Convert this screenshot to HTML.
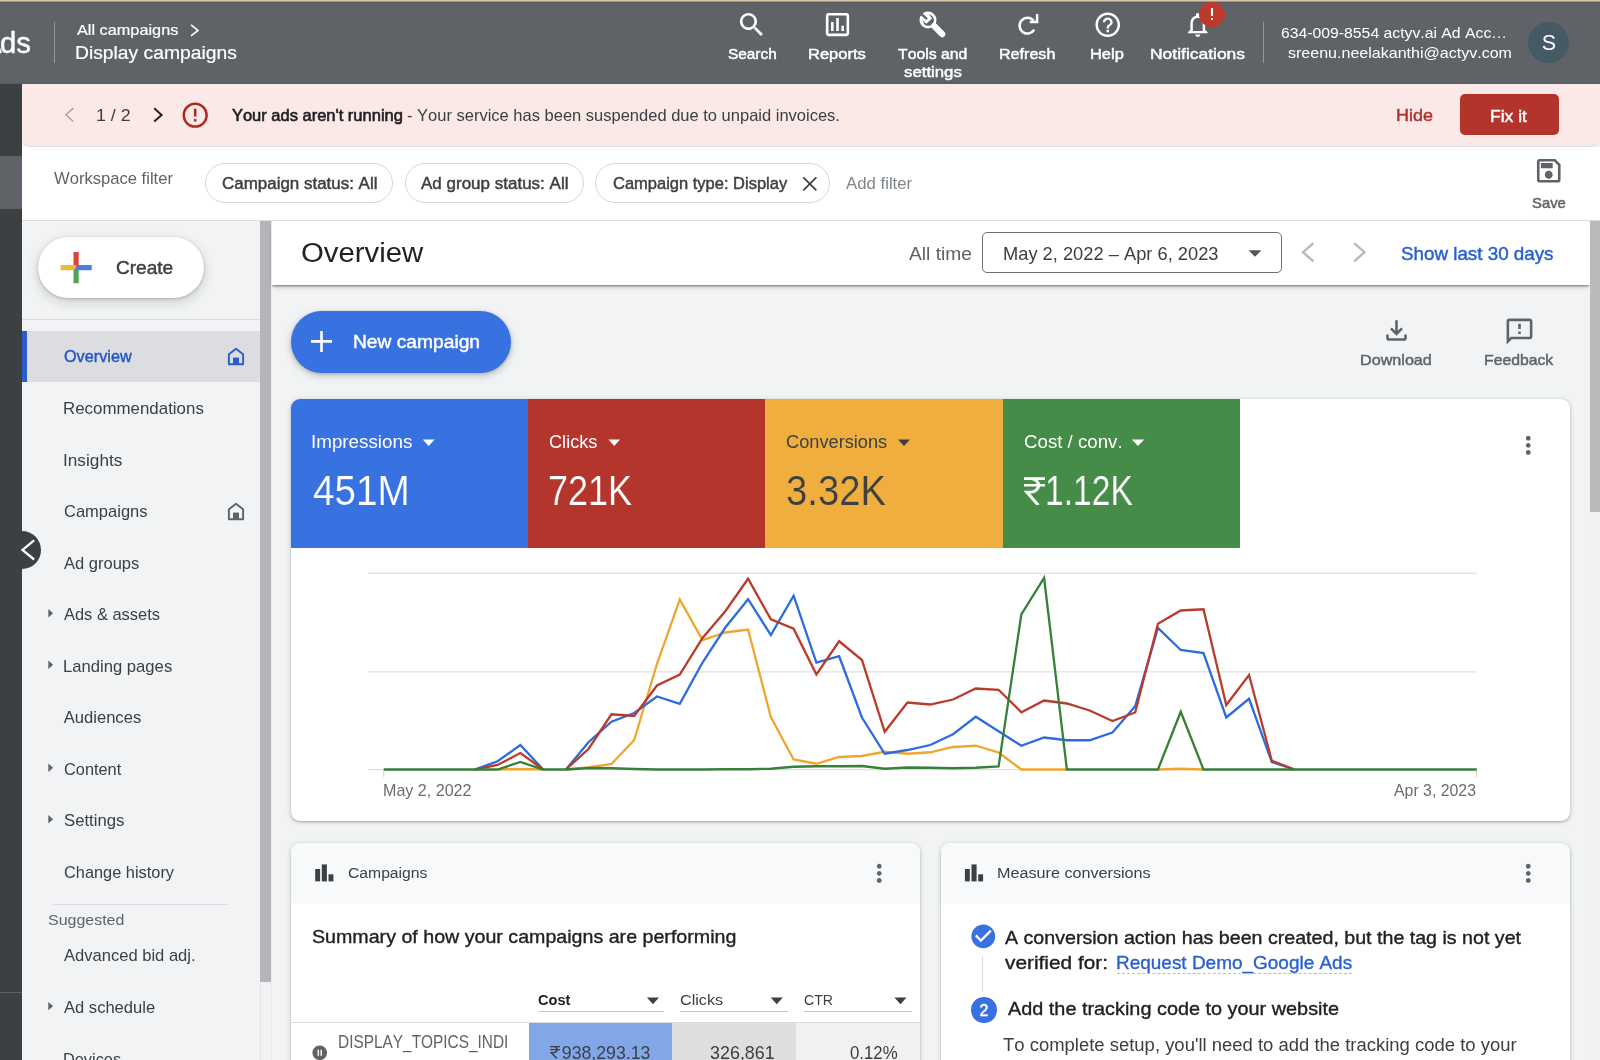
<!DOCTYPE html>
<html><head><meta charset="utf-8"><title>Google Ads - Overview</title>
<style>
html,body{margin:0;padding:0}
body{width:1600px;height:1060px;overflow:hidden;position:relative;font-family:"Liberation Sans", sans-serif;background:#f1f3f4}
#r{position:absolute;left:0;top:0;width:1600px;height:1060px;overflow:hidden;will-change:transform}
#r div,#r span,#r svg{position:absolute;display:block;box-sizing:content-box}
#r span{white-space:pre;font-kerning:none;font-family:"Liberation Sans", sans-serif;transform-origin:0 0}
</style></head>
<body><div id="r">
<div style="left:0px;top:0px;width:1600px;height:1060px;background:#f1f3f4;"></div>
<div style="left:0px;top:0px;width:1600px;height:1px;background:#dcc5a8;"></div>
<div style="left:0px;top:1px;width:1600px;height:1px;background:#a59887;"></div>
<div style="left:0px;top:2px;width:1600px;height:1px;background:#565a5f;"></div>
<div style="left:0px;top:3px;width:1600px;height:81px;background:#5f6368;"></div>
<div style="left:0px;top:84px;width:22px;height:980px;background:#3c4043;"></div>
<div style="left:0px;top:156px;width:22px;height:53px;background:#5f6368;"></div>
<div style="left:0px;top:992px;width:22px;height:1px;background:#5f6368;"></div>
<div style="left:22px;top:84px;width:1578px;height:62px;background:#fae9e6;border-radius:0 0 9px 9px;box-shadow:0 1px 0 0 #dde0e6;"></div>
<div style="left:22px;top:84px;width:1578px;height:3px;background:#fae9e6;"></div>
<div style="left:0px;top:82px;width:1600px;height:2px;background:#5b5f64;"></div>
<div style="left:22px;top:147px;width:1578px;height:73px;background:#fff;"></div>
<div style="left:22px;top:220px;width:1578px;height:1px;background:#dcdde1;"></div>
<span style="left:-0.39px;top:25.20px;font-size:29.5px;line-height:35px;color:#fff;-webkit-text-stroke:0.4px #fff;transform:scaleX(0.9930);">ds</span>
<svg style="left:0;top:0" width="10" height="60"><path d="M-3 44L0.6 53.2" stroke="#fff" stroke-width="3" fill="none"/></svg>
<div style="left:53.5px;top:22px;width:1px;height:41px;background:rgba(255,255,255,.32);"></div>
<span style="left:76.50px;top:20.70px;font-size:15px;line-height:18px;color:#fff;-webkit-text-stroke:0.2px #fff;transform:scaleX(1.0853);">All campaigns</span>
<svg style="left:0;top:0" width="1600" height="1060"><polyline fill="none" stroke="#fff" stroke-width="1.6" points="191.00,24.90 198.00,30.40 191.00,35.90"/></svg>
<span style="left:75.42px;top:43.10px;font-size:17.8px;line-height:21px;color:#fff;-webkit-text-stroke:0.2px #fff;transform:scaleX(1.0840);">Display campaigns</span>
<svg style="left:736.35px;top:8.95px;" width="31.5" height="31.5" viewBox="0 0 24 24"><path fill="#fff" d="M15.5 14h-.79l-.28-.27C15.41 12.59 16 11.11 16 9.5 16 5.91 13.09 3 9.5 3S3 5.91 3 9.5 5.91 16 9.5 16c1.61 0 3.09-.59 4.23-1.57l.27.28v.79l5 4.99L20.49 19l-4.99-5zm-6 0C7.01 14 5 11.99 5 9.5S7.01 5 9.5 5 14 7.01 14 9.5 11.99 14 9.5 14z"/></svg>
<svg style="left:821.7px;top:9.0px;" width="31" height="31" viewBox="0 0 24 24"><path fill="#fff" d="M19 3H5c-1.1 0-2 .9-2 2v14c0 1.1.9 2 2 2h14c1.1 0 2-.9 2-2V5c0-1.1-.9-2-2-2zm0 16H5V5h14v14zM7 10h2v7H7zm4-3h2v10h-2zm4 6h2v4h-2z"/></svg>
<svg style="left:1092.85px;top:10.25px;" width="29.5" height="29.5" viewBox="0 0 24 24"><path fill="#fff" d="M11 18h2v-2h-2v2zm1-16C6.48 2 2 6.48 2 12s4.48 10 10 10 10-4.48 10-10S17.52 2 12 2zm0 18c-4.41 0-8-3.59-8-8s3.59-8 8-8 8 3.59 8 8-3.59 8-8 8zm0-14c-2.21 0-4 1.79-4 4h2c0-1.1.9-2 2-2s2 .9 2 2c0 2-3 1.75-3 5h2c0-2.25 3-2.5 3-5 0-2.21-1.79-4-4-4z"/></svg>
<svg style="left:1182.85px;top:10.45px;" width="29.5" height="29.5" viewBox="0 0 24 24"><path fill="#fff" d="M12 22c1.1 0 2-.9 2-2h-4c0 1.1.9 2 2 2zm6-6v-5c0-3.07-1.63-5.64-4.5-6.32V4c0-.83-.67-1.5-1.5-1.5s-1.5.67-1.5 1.5v.68C7.64 5.36 6 7.92 6 11v5l-2 2v1h16v-1l-2-2zm-2 1H8v-6c0-2.48 1.51-4.5 4-4.5s4 2.02 4 4.5v6z"/></svg>
<span style="left:727.50px;top:45.30px;font-size:14.8px;line-height:18px;color:#fff;-webkit-text-stroke:0.45px #fff;transform:scaleX(1.0396);">Search</span>
<span style="left:807.69px;top:45.30px;font-size:14.8px;line-height:18px;color:#fff;-webkit-text-stroke:0.45px #fff;transform:scaleX(1.1148);">Reports</span>
<span style="left:898.00px;top:45.30px;font-size:14.8px;line-height:18px;color:#fff;-webkit-text-stroke:0.45px #fff;transform:scaleX(1.0656);">Tools and</span>
<span style="left:903.80px;top:63.30px;font-size:14.8px;line-height:18px;color:#fff;-webkit-text-stroke:0.45px #fff;transform:scaleX(1.1345);">settings</span>
<span style="left:998.91px;top:45.30px;font-size:14.8px;line-height:18px;color:#fff;-webkit-text-stroke:0.45px #fff;transform:scaleX(1.0874);">Refresh</span>
<span style="left:1089.89px;top:45.30px;font-size:14.8px;line-height:18px;color:#fff;-webkit-text-stroke:0.45px #fff;transform:scaleX(1.1095);">Help</span>
<span style="left:1149.82px;top:45.30px;font-size:14.8px;line-height:18px;color:#fff;-webkit-text-stroke:0.45px #fff;transform:scaleX(1.1793);">Notifications</span>
<svg style="left:0;top:0" width="1600" height="1060"><circle cx="928" cy="19.9" r="8.5" fill="#fff"/><circle cx="928.3" cy="20.2" r="5.6" fill="#5f6368"/><path d="M922.0 20.1L926.3 23.8L932.2 18.2L928.2 14.0L922.6 14.6L920.6 19.6z" fill="#fff"/><path d="M921.4 14.1L927.0 19.2" fill="none" stroke="#5f6368" stroke-width="2.4"/><path d="M934.2 26.0L942.2 34.2" fill="none" stroke="#fff" stroke-width="6.2" stroke-linecap="round"/><path d="M1033.6 20.6A7.9 7.9 0 1 0 1034.3 29.6" fill="none" stroke="#fff" stroke-width="2.5"/><path d="M1029.8 22.1H1037.1V13.9" fill="none" stroke="#fff" stroke-width="2.5"/></svg>
<div style="left:1199.4px;top:1.5px;width:25.2px;height:25.2px;background:#bd392c;border-radius:50%;"></div>
<div style="left:1210.7px;top:7.5px;width:2.4px;height:8px;background:#fff;"></div>
<div style="left:1210.7px;top:17.6px;width:2.4px;height:2.5px;background:#fff;"></div>
<div style="left:1262.5px;top:22px;width:1px;height:41px;background:rgba(255,255,255,.32);"></div>
<span style="left:1280.60px;top:23.50px;font-size:14.8px;line-height:18px;color:#fff;transform:scaleX(1.0651);">634-009-8554 actyv.ai Ad Acc…</span>
<span style="left:1288.00px;top:44.40px;font-size:14.8px;line-height:18px;color:#fff;transform:scaleX(1.0837);">sreenu.neelakanthi@actyv.com</span>
<div style="left:1528px;top:22px;width:40.6px;height:40.6px;background:#455a64;border-radius:50%;"></div>
<span style="left:1541.80px;top:30.20px;font-size:21.5px;line-height:26px;color:#fff;">S</span>
<svg style="left:0;top:0" width="1600" height="1060"><polyline fill="none" stroke="#aaa3a3" stroke-width="1.5" points="73.30,108.10 65.90,114.80 73.30,121.50"/></svg>
<span style="left:96.16px;top:104.90px;font-size:17.1px;line-height:21px;color:#3c4043;transform:scaleX(1.0424);">1 / 2</span>
<svg style="left:0;top:0" width="1600" height="1060"><polyline fill="none" stroke="#202124" stroke-width="2" points="154.20,108.30 161.60,114.90 154.20,121.50"/></svg>
<svg style="left:179.9px;top:99.7px;" width="30.4" height="30.4" viewBox="0 0 24 24"><path fill="#b3261e" d="M11 15h2v2h-2zm0-8h2v6h-2zm.99-5C6.47 2 2 6.48 2 12s4.47 10 9.99 10C17.52 22 22 17.52 22 12S17.52 2 11.99 2zM12 20c-4.42 0-8-3.58-8-8s3.58-8 8-8 8 3.58 8 8-3.58 8-8 8z"/></svg>
<span style="left:231.90px;top:104.90px;font-size:16.5px;line-height:20px;color:#202124;-webkit-text-stroke:0.6px #202124;">Your ads aren&#x27;t running</span>
<span style="left:407.00px;top:104.90px;font-size:16.5px;line-height:20px;color:#3c4043;">- Your service has been suspended due to unpaid invoices.</span>
<span style="left:1396.42px;top:106.00px;font-size:16.6px;line-height:20px;color:#b3302a;-webkit-text-stroke:0.45px #b3302a;transform:scaleX(1.0821);">Hide</span>
<div style="left:1459.5px;top:94.3px;width:99.5px;height:41px;background:#b3342b;border-radius:5px;"></div>
<span style="left:1489.95px;top:107.10px;font-size:16.6px;line-height:20px;color:#fff;-webkit-text-stroke:0.45px #fff;transform:scaleX(1.0547);">Fix it</span>
<span style="left:53.70px;top:169.00px;font-size:16.7px;line-height:20px;color:#5f6368;transform:scaleX(0.9944);">Workspace filter</span>
<div style="left:205px;top:162.8px;width:186.39999999999998px;height:38.6px;background:#fff;border:1px solid #d4d6db;border-radius:21px;"></div>
<span style="left:221.50px;top:172.70px;font-size:16.3px;line-height:20px;color:#3c4043;-webkit-text-stroke:0.45px #3c4043;transform:scaleX(1.0410);">Campaign status: All</span>
<div style="left:404.7px;top:162.8px;width:177.7px;height:38.6px;background:#fff;border:1px solid #d4d6db;border-radius:21px;"></div>
<span style="left:421.30px;top:172.70px;font-size:16.3px;line-height:20px;color:#3c4043;-webkit-text-stroke:0.45px #3c4043;transform:scaleX(1.0444);">Ad group status: All</span>
<div style="left:595.3px;top:162.8px;width:232.4000000000001px;height:38.6px;background:#fff;border:1px solid #d4d6db;border-radius:21px;"></div>
<span style="left:612.50px;top:172.70px;font-size:16.3px;line-height:20px;color:#3c4043;-webkit-text-stroke:0.45px #3c4043;transform:scaleX(1.0127);">Campaign type: Display</span>
<svg style="left:0;top:0" width="1600" height="1060"><path d="M803.3 177.3L816.4 190.4M816.4 177.3L803.3 190.4" stroke="#3c4043" stroke-width="1.7" fill="none"/></svg>
<span style="left:846.30px;top:172.70px;font-size:16.5px;line-height:20px;color:#80868b;transform:scaleX(1.0165);">Add filter</span>
<svg style="left:1532.75px;top:154.75px;" width="31.5" height="31.5" viewBox="0 0 24 24"><path fill="#5f6368" d="M17 3H5c-1.11 0-2 .9-2 2v14c0 1.1.89 2 2 2h14c1.1 0 2-.9 2-2V7l-4-4zm2 16H5V5h11.17L19 7.83V19zm-7-7c-1.66 0-3 1.34-3 3s1.34 3 3 3 3-1.34 3-3-1.34-3-3-3zM6 6h9v4H6z"/></svg>
<span style="left:1531.60px;top:194.80px;font-size:14.5px;line-height:17px;color:#5f6368;-webkit-text-stroke:0.45px #5f6368;transform:scaleX(1.0247);">Save</span>
<div style="left:259.6px;top:221px;width:11px;height:761px;background:#b4b5b8;"></div>
<div style="left:259.6px;top:982px;width:11px;height:80px;background:#f1f2f3;"></div>
<div style="left:259.6px;top:982px;width:1px;height:80px;background:#e2e3e5;"></div>
<div style="left:37.5px;top:236.6px;width:166.5px;height:61.6px;background:#fff;border-radius:31px;box-shadow:0 1px 3px rgba(60,64,67,.3),0 4px 8px 3px rgba(60,64,67,.12);"></div>
<svg style="left:0;top:0" width="1600" height="1060"><rect x="73.5" y="252.00000000000003" width="5.2" height="15.6" fill="#d9453a"/><rect x="73.5" y="267.6" width="5.2" height="15.6" fill="#4ea355"/><rect x="60.49999999999999" y="265.0" width="15.6" height="5.2" fill="#f0b93b"/><polygon points="73.5,270.20000000000005 78.69999999999999,265.0 91.69999999999999,265.0 91.69999999999999,270.20000000000005" fill="#4a7fe6"/></svg>
<span style="left:115.60px;top:256.70px;font-size:18.6px;line-height:22px;color:#3c4043;-webkit-text-stroke:0.45px #3c4043;transform:scaleX(1.0240);">Create</span>
<div style="left:22px;top:319px;width:237.6px;height:1px;background:#dadce0;"></div>
<div style="left:22px;top:331px;width:237.6px;height:51px;background:#dcdde0;"></div>
<div style="left:22px;top:331px;width:5px;height:51px;background:#2b5dc9;"></div>
<svg style="left:227.00px;top:347.40px" width="18" height="19" viewBox="0 0 18 19"><path d="M1.9 7.2L9 1.7l7.1 5.5V17.2H1.9z" fill="none" stroke="#2b5dc9" stroke-width="1.9" stroke-linejoin="round"/><rect x="6" y="10.6" width="6" height="6.6" fill="#2b5dc9"/></svg>
<svg style="left:226.80px;top:502.30px" width="18" height="19" viewBox="0 0 18 19"><path d="M1.9 7.2L9 1.7l7.1 5.5V17.2H1.9z" fill="none" stroke="#5f6368" stroke-width="1.9" stroke-linejoin="round"/><rect x="6" y="10.6" width="6" height="6.6" fill="#5f6368"/></svg>
<span style="left:63.70px;top:346.10px;font-size:16.5px;line-height:20px;color:#2357c6;-webkit-text-stroke:0.45px #2357c6;transform:scaleX(0.9833);">Overview</span>
<span style="left:62.68px;top:399.00px;font-size:16.6px;line-height:20px;color:#3c4043;transform:scaleX(1.0179);">Recommendations</span>
<span style="left:62.66px;top:450.60px;font-size:16.6px;line-height:20px;color:#3c4043;transform:scaleX(1.0378);">Insights</span>
<span style="left:63.70px;top:502.10px;font-size:16.6px;line-height:20px;color:#3c4043;transform:scaleX(0.9948);">Campaigns</span>
<span style="left:63.70px;top:553.60px;font-size:16.6px;line-height:20px;color:#3c4043;transform:scaleX(0.9954);">Ad groups</span>
<span style="left:63.70px;top:605.10px;font-size:16.6px;line-height:20px;color:#3c4043;transform:scaleX(0.9913);">Ads &amp; assets</span>
<svg style="left:0;top:0" width="1600" height="1060"><polygon fill="#5f6368" points="48.3,609.0 53.099999999999994,613.2 48.3,617.4000000000001"/></svg>
<span style="left:62.70px;top:656.60px;font-size:16.6px;line-height:20px;color:#3c4043;transform:scaleX(1.0029);">Landing pages</span>
<svg style="left:0;top:0" width="1600" height="1060"><polygon fill="#5f6368" points="48.3,660.5 53.099999999999994,664.7 48.3,668.9000000000001"/></svg>
<span style="left:63.70px;top:708.10px;font-size:16.6px;line-height:20px;color:#3c4043;">Audiences</span>
<span style="left:63.70px;top:759.60px;font-size:16.6px;line-height:20px;color:#3c4043;transform:scaleX(0.9845);">Content</span>
<svg style="left:0;top:0" width="1600" height="1060"><polygon fill="#5f6368" points="48.3,763.5 53.099999999999994,767.7 48.3,771.9000000000001"/></svg>
<span style="left:63.70px;top:811.10px;font-size:16.6px;line-height:20px;color:#3c4043;transform:scaleX(1.0057);">Settings</span>
<svg style="left:0;top:0" width="1600" height="1060"><polygon fill="#5f6368" points="48.3,815.0 53.099999999999994,819.2 48.3,823.4000000000001"/></svg>
<span style="left:63.70px;top:862.60px;font-size:16.6px;line-height:20px;color:#3c4043;transform:scaleX(0.9856);">Change history</span>
<span style="left:63.70px;top:946.40px;font-size:16.6px;line-height:20px;color:#3c4043;transform:scaleX(0.9976);">Advanced bid adj.</span>
<span style="left:63.70px;top:998.00px;font-size:16.6px;line-height:20px;color:#3c4043;transform:scaleX(0.9978);">Ad schedule</span>
<svg style="left:0;top:0" width="1600" height="1060"><polygon fill="#5f6368" points="48.3,1001.9 53.099999999999994,1006.1 48.3,1010.3000000000001"/></svg>
<span style="left:62.72px;top:1049.50px;font-size:16.6px;line-height:20px;color:#3c4043;transform:scaleX(0.9840);">Devices</span>
<div style="left:53px;top:903.5px;width:175px;height:1px;background:#dadce0;"></div>
<span style="left:47.90px;top:911.00px;font-size:15.3px;line-height:18px;color:#5f6368;transform:scaleX(1.0435);">Suggested</span>
<div style="left:2.2px;top:530.5px;width:38.6px;height:38.6px;background:#3c4043;border-radius:50%;"></div>
<svg style="left:0;top:0" width="1600" height="1060"><polyline fill="none" stroke="#fff" stroke-width="2.3" points="34.10,540.30 22.50,549.90 34.10,559.50"/></svg>
<div style="left:271px;top:221px;width:1319px;height:63.5px;background:#fff;box-shadow:0 2px 2px -1px rgba(0,0,0,.42),0 4px 5px -2px rgba(0,0,0,.2);"></div>
<div style="left:270.6px;top:221px;width:1px;height:840px;background:#e9eaec;"></div>
<div style="left:1590px;top:221px;width:10px;height:291px;background:#b9babc;"></div>
<div style="left:1590px;top:512px;width:10px;height:550px;background:#f1f1f1;"></div>
<span style="left:301.10px;top:236.90px;font-size:26.8px;line-height:32px;color:#202124;transform:scaleX(1.0950);">Overview</span>
<span style="left:908.60px;top:243.90px;font-size:17.6px;line-height:21px;color:#5f6368;transform:scaleX(1.0933);">All time</span>
<div style="left:982px;top:231.7px;width:298px;height:39.6px;background:#fff;border:1px solid #6b7177;border-radius:5px;"></div>
<span style="left:1002.99px;top:243.00px;font-size:18.1px;line-height:22px;color:#3c4043;transform:scaleX(1.0104);">May 2, 2022 – Apr 6, 2023</span>
<svg style="left:0;top:0" width="1600" height="1060"><polygon fill="#50555a" points="1248.6,250.2 1261.4,250.2 1255.0,256.8"/></svg>
<svg style="left:0;top:0" width="1600" height="1060"><polyline fill="none" stroke="#b7b8ba" stroke-width="2.3" points="1313.40,243.10 1303.00,252.20 1313.40,261.30"/></svg>
<svg style="left:0;top:0" width="1600" height="1060"><polyline fill="none" stroke="#b7b8ba" stroke-width="2.3" points="1354.10,243.10 1364.50,252.20 1354.10,261.30"/></svg>
<span style="left:1401.20px;top:243.00px;font-size:18.6px;line-height:22px;color:#2a5fd1;-webkit-text-stroke:0.45px #2a5fd1;transform:scaleX(1.0106);">Show last 30 days</span>
<div style="left:291px;top:311px;width:219.8px;height:61.5px;background:#3871e0;border-radius:31px;box-shadow:0 1px 3px rgba(60,64,67,.3),0 3px 6px 2px rgba(60,64,67,.15);"></div>
<svg style="left:0;top:0" width="1600" height="1060"><path d="M311 341.4H332M321.5 330.9V351.9" stroke="#fff" stroke-width="2.6" fill="none"/></svg>
<span style="left:352.64px;top:330.70px;font-size:18.2px;line-height:22px;color:#fff;-webkit-text-stroke:0.45px #fff;transform:scaleX(1.0560);">New campaign</span>
<svg style="left:1381.0px;top:315.0px;" width="31" height="31" viewBox="0 0 24 24"><path fill="#5f6368" d="M18 15v3H6v-3H4v3c0 1.1.9 2 2 2h12c1.1 0 2-.9 2-2v-3h-2zm-1-4l-1.41-1.41L13 12.17V4h-2v8.17L8.41 9.59 7 11l5 5 5-5z"/></svg>
<span style="left:1360.21px;top:351.10px;font-size:14.8px;line-height:18px;color:#5f6368;-webkit-text-stroke:0.45px #5f6368;transform:scaleX(1.0917);">Download</span>
<svg style="left:1503.5px;top:316.3px;" width="31" height="31" viewBox="0 0 24 24"><path fill="#5f6368" d="M20 2H4c-1.1 0-1.99.9-1.99 2L2 22l4-4h14c1.1 0 2-.9 2-2V4c0-1.1-.9-2-2-2zm0 14H5.17l-.59.59-.58.58V4h16v12zm-9-4h2v2h-2zm0-6h2v4h-2z"/></svg>
<span style="left:1483.53px;top:351.10px;font-size:14.8px;line-height:18px;color:#5f6368;-webkit-text-stroke:0.45px #5f6368;transform:scaleX(1.0653);">Feedback</span>
<div style="left:291px;top:398.5px;width:1278.5px;height:422px;background:#fff;border-radius:9px;box-shadow:0 1px 2px rgba(60,64,67,.3),0 1px 4px 1px rgba(60,64,67,.15);overflow:hidden;"><div style="left:0;top:0;width:237px;height:149px;background:#3871e0"></div><div style="left:237px;top:0;width:237px;height:149px;background:#b3352b"></div><div style="left:474px;top:0;width:237.5px;height:149px;background:#efae3e"></div><div style="left:711.5px;top:0;width:237px;height:149px;background:#458c48"></div></div>
<span style="left:310.83px;top:432.20px;font-size:17.6px;line-height:21px;color:#fff;transform:scaleX(1.0686);">Impressions</span>
<svg style="left:0;top:0" width="1600" height="1060"><polygon fill="#fff" points="422.8,439.6 434.6,439.6 428.70000000000005,446.1"/></svg>
<span style="left:549.30px;top:432.20px;font-size:17.6px;line-height:21px;color:#fff;transform:scaleX(1.0315);">Clicks</span>
<svg style="left:0;top:0" width="1600" height="1060"><polygon fill="#fff" points="608.4,439.6 620,439.6 614.2,446.1"/></svg>
<span style="left:786.30px;top:432.20px;font-size:17.6px;line-height:21px;color:#3c4043;transform:scaleX(1.0348);">Conversions</span>
<svg style="left:0;top:0" width="1600" height="1060"><polygon fill="#3c4043" points="898,439.6 910,439.6 904.0,446.1"/></svg>
<span style="left:1024.00px;top:432.20px;font-size:17.6px;line-height:21px;color:#fff;transform:scaleX(1.0619);">Cost / conv.</span>
<svg style="left:0;top:0" width="1600" height="1060"><polygon fill="#fff" points="1131.8,439.6 1144.2,439.6 1138.0,446.1"/></svg>
<span style="left:313.10px;top:465.80px;font-size:41.6px;line-height:50px;color:#fff;transform:scaleX(0.9300);-webkit-text-stroke:0.22px #3871e0;">451M</span>
<span style="left:547.97px;top:465.80px;font-size:41.6px;line-height:50px;color:#fff;transform:scaleX(0.8648);-webkit-text-stroke:0.22px #b3352b;">721K</span>
<span style="left:786.28px;top:465.80px;font-size:41.6px;line-height:50px;color:#3c4043;transform:scaleX(0.9189);-webkit-text-stroke:0.22px #efae3e;">3.32K</span>
<span style="left:1044.98px;top:465.80px;font-size:41.6px;line-height:50px;color:#fff;transform:scaleX(0.8079);-webkit-text-stroke:0.22px #458c48;">1.12K</span>
<svg style="left:1023.90px;top:476.80px" width="21.02" height="28.40" viewBox="0 0 62 100" preserveAspectRatio="none"><path d="M0 5.5H62M0 29H62M0 5.5H20C42 5.5 43 29 43 29C43 29 42 53 20 53H8L42 99" fill="none" stroke="#fff" stroke-width="9.5" stroke-linejoin="miter"/></svg>
<svg style="left:1513.75px;top:431.25px;" width="28.5" height="28.5" viewBox="0 0 24 24"><path fill="#5f6368" d="M12 8c1.1 0 2-.9 2-2s-.9-2-2-2-2 .9-2 2 .9 2 2 2zm0 2c-1.1 0-2 .9-2 2s.9 2 2 2 2-.9 2-2-.9-2-2-2zm0 6c-1.1 0-2 .9-2 2s.9 2 2 2 2-.9 2-2-.9-2-2-2z"/></svg>
<svg style="left:0;top:0" width="1600" height="1060"><line x1="368" x2="1476.8" y1="573.3" y2="573.3" stroke="#e0e0e0" stroke-width="1.2"/><line x1="368" x2="1476.8" y1="671.8" y2="671.8" stroke="#e0e0e0" stroke-width="1.2"/><line x1="368" x2="1476.8" y1="769.6" y2="769.6" stroke="#e0e0e0" stroke-width="1.2"/><line x1="383.8" x2="383.8" y1="769.5" y2="777" stroke="#d0d0d0" stroke-width="1"/><line x1="1476.6" x2="1476.6" y1="769.5" y2="777" stroke="#d0d0d0" stroke-width="1"/><path fill="none" stroke="#f0a62c" stroke-width="2.3" stroke-linejoin="miter" d="M497.60 769.50L520.38 769.00L543.15 769.50M565.92 769.50L588.69 767.50L611.46 764.00L634.23 740.00L657.00 663.75L679.77 599.50L702.54 640.00L725.31 632.50L748.08 629.50L770.85 717.00L793.62 759.50L816.40 763.75L839.17 757.00L861.94 756.00L884.71 751.75L907.48 753.75L930.25 752.25L953.02 747.00L975.79 745.75L998.56 752.50L1021.33 769.50L1044.10 769.50L1066.88 769.50M1157.96 769.50L1180.73 768.75L1203.50 769.50"/><path fill="none" stroke="#2d6be0" stroke-width="2.3" stroke-linejoin="miter" d="M474.83 769.50L497.60 761.25L520.38 745.00L543.15 769.50M565.92 769.50L588.69 742.00L611.46 721.75L634.23 713.00L657.00 696.50L679.77 703.75L702.54 662.50L725.31 627.50L748.08 599.25L770.85 635.00L793.62 595.75L816.40 662.50L839.17 656.25L861.94 717.50L884.71 753.75L907.48 750.00L930.25 745.00L953.02 734.25L975.79 716.75L998.56 731.25L1021.33 745.75L1044.10 737.50L1066.88 740.25L1089.65 740.25L1112.42 732.50L1135.19 706.25L1157.96 628.00L1180.73 650.00L1203.50 653.00L1226.27 717.50L1249.04 698.75L1271.81 762.00L1294.58 769.50"/><path fill="none" stroke="#b93b2c" stroke-width="2.3" stroke-linejoin="miter" d="M474.83 769.50L497.60 765.00L520.38 753.00L543.15 769.50M565.92 769.50L588.69 748.75L611.46 714.25L634.23 716.00L657.00 685.50L679.77 674.50L702.54 638.00L725.31 611.25L748.08 578.75L770.85 619.25L793.62 628.75L816.40 674.50L839.17 641.25L861.94 660.00L884.71 731.75L907.48 702.50L930.25 704.50L953.02 699.50L975.79 688.50L998.56 689.75L1021.33 712.25L1044.10 700.50L1066.88 703.50L1089.65 710.50L1112.42 721.00L1135.19 712.50L1157.96 623.75L1180.73 610.50L1203.50 609.25L1226.27 705.00L1249.04 675.00L1271.81 760.75L1294.58 769.50"/><path fill="none" stroke="#36803a" stroke-width="2.3" stroke-linejoin="miter" d="M383.75 769.50L406.52 769.50L429.29 769.50L452.06 769.50L474.83 769.50L497.60 769.50L520.38 762.00L543.15 769.50L565.92 769.50L588.69 768.00L611.46 768.25L634.23 769.00L657.00 769.50L679.77 769.50L702.54 769.50L725.31 769.25L748.08 769.25L770.85 768.75L793.62 766.75L816.40 766.25L839.17 766.25L861.94 766.00L884.71 768.75L907.48 767.50L930.25 767.75L953.02 768.25L975.79 767.75L998.56 766.50L1021.33 614.50L1044.10 578.00L1066.88 769.50L1089.65 769.50L1112.42 769.50L1135.19 769.50L1157.96 769.50L1180.73 711.75L1203.50 769.50L1226.27 769.50L1249.04 769.50L1271.81 769.50L1294.58 769.50L1317.35 769.50L1340.12 769.50L1362.90 769.50L1385.67 769.50L1408.44 769.50L1431.21 769.50L1453.98 769.50L1476.75 769.50"/></svg>
<span style="left:383.19px;top:780.50px;font-size:15.9px;line-height:19px;color:#6b6d70;transform:scaleX(1.0114);">May 2, 2022</span>
<span style="left:1393.70px;top:780.50px;font-size:15.9px;line-height:19px;color:#6b6d70;transform:scaleX(0.9973);">Apr 3, 2023</span>
<div style="left:291px;top:842.5px;width:629px;height:230px;background:#fff;border-radius:9px;box-shadow:0 1px 2px rgba(60,64,67,.3),0 1px 4px 1px rgba(60,64,67,.15);overflow:hidden;"><div style="left:0;top:0;width:629px;height:61px;background:#f8f9fa"></div><div style="left:0;top:179.7px;width:629px;height:1.2px;background:#dcdcdc"></div><div style="left:238.2px;top:180.5px;width:143.1px;height:60px;background:#82a7e8"></div><div style="left:381.3px;top:180.5px;width:123.4px;height:60px;background:#dedede"></div><div style="left:504.7px;top:180.5px;width:125px;height:60px;background:#f1f1f1"></div></div>
<svg style="left:0;top:0" width="1600" height="1060"><rect x="315.2" y="869" width="4.9" height="12.4" fill="#3c4043"/><rect x="321.8" y="864.4" width="5.1" height="17" fill="#3c4043"/><rect x="328.5" y="874.3" width="4.9" height="7.1" fill="#3c4043"/></svg>
<span style="left:348.00px;top:864.10px;font-size:15.4px;line-height:18px;color:#3c4043;transform:scaleX(1.0198);">Campaigns</span>
<svg style="left:864.75px;top:859.05px;" width="28.5" height="28.5" viewBox="0 0 24 24"><path fill="#5f6368" d="M12 8c1.1 0 2-.9 2-2s-.9-2-2-2-2 .9-2 2 .9 2 2 2zm0 2c-1.1 0-2 .9-2 2s.9 2 2 2 2-.9 2-2-.9-2-2-2zm0 6c-1.1 0-2 .9-2 2s.9 2 2 2 2-.9 2-2-.9-2-2-2z"/></svg>
<span style="left:311.80px;top:926.40px;font-size:18.4px;line-height:22px;color:#202124;-webkit-text-stroke:0.36px #202124;transform:scaleX(1.0672);">Summary of how your campaigns are performing</span>
<span style="left:537.80px;top:990.30px;font-size:15.5px;line-height:19px;color:#202124;font-weight:700;transform:scaleX(0.9393);">Cost</span>
<span style="left:680.20px;top:990.30px;font-size:15.5px;line-height:19px;color:#3c4043;transform:scaleX(1.0413);">Clicks</span>
<span style="left:804.00px;top:990.30px;font-size:15.5px;line-height:19px;color:#3c4043;transform:scaleX(0.9096);">CTR</span>
<div style="left:537.8px;top:1010.8px;width:126.70000000000005px;height:1.2px;background:#c4c4c4;"></div>
<svg style="left:0;top:0" width="1600" height="1060"><polygon fill="#3c4043" points="646.9000000000001,997.5 659.0,997.5 652.95,1004.3"/></svg>
<div style="left:680.2px;top:1010.8px;width:108.09999999999991px;height:1.2px;background:#c4c4c4;"></div>
<svg style="left:0;top:0" width="1600" height="1060"><polygon fill="#3c4043" points="770.7,997.5 782.8,997.5 776.75,1004.3"/></svg>
<div style="left:804px;top:1010.8px;width:108px;height:1.2px;background:#c4c4c4;"></div>
<svg style="left:0;top:0" width="1600" height="1060"><polygon fill="#3c4043" points="894.4000000000001,997.5 906.5,997.5 900.45,1004.3"/></svg>
<svg style="left:310.85px;top:1044.05px;" width="17.5" height="17.5" viewBox="0 0 24 24"><path fill="#5f6368" d="M12 2C6.48 2 2 6.48 2 12s4.48 10 10 10 10-4.48 10-10S17.52 2 12 2zm-1 14H9V8h2v8zm4 0h-2V8h2v8z"/></svg>
<span style="left:338.13px;top:1031.80px;font-size:17.8px;line-height:21px;color:#5f6368;transform:scaleX(0.8664);">DISPLAY_TOPICS_INDI</span>
<span style="left:561.80px;top:1042.60px;font-size:17.7px;line-height:21px;color:#3c4043;">938,293.13</span>
<svg style="left:550.30px;top:1046.20px" width="10.08" height="12.60" viewBox="0 0 62 100" preserveAspectRatio="none"><path d="M0 5.5H62M0 29H62M0 5.5H20C42 5.5 43 29 43 29C43 29 42 53 20 53H8L42 99" fill="none" stroke="#3c4043" stroke-width="10.5" stroke-linejoin="miter"/></svg>
<span style="left:709.90px;top:1042.60px;font-size:17.7px;line-height:21px;color:#3c4043;transform:scaleX(1.0127);">326,861</span>
<span style="left:850.10px;top:1042.60px;font-size:17.7px;line-height:21px;color:#3c4043;transform:scaleX(0.9499);">0.12%</span>
<div style="left:941px;top:842.5px;width:628.5px;height:230px;background:#fff;border-radius:9px;box-shadow:0 1px 2px rgba(60,64,67,.3),0 1px 4px 1px rgba(60,64,67,.15);overflow:hidden;"><div style="left:0;top:0;width:629px;height:61px;background:#f8f9fa"></div></div>
<svg style="left:0;top:0" width="1600" height="1060"><rect x="964.9" y="869" width="4.9" height="12.4" fill="#3c4043"/><rect x="971.5" y="864.4" width="5.1" height="17" fill="#3c4043"/><rect x="978.1999999999999" y="874.3" width="4.9" height="7.1" fill="#3c4043"/></svg>
<span style="left:996.75px;top:864.10px;font-size:15.4px;line-height:18px;color:#3c4043;transform:scaleX(1.0503);">Measure conversions</span>
<svg style="left:1514.35px;top:859.05px;" width="28.5" height="28.5" viewBox="0 0 24 24"><path fill="#5f6368" d="M12 8c1.1 0 2-.9 2-2s-.9-2-2-2-2 .9-2 2 .9 2 2 2zm0 2c-1.1 0-2 .9-2 2s.9 2 2 2 2-.9 2-2-.9-2-2-2zm0 6c-1.1 0-2 .9-2 2s.9 2 2 2 2-.9 2-2-.9-2-2-2z"/></svg>
<svg style="left:968.8px;top:921.6px;" width="28.6" height="28.6" viewBox="0 0 24 24"><path fill="#3871e0" d="M12 2C6.48 2 2 6.48 2 12s4.48 10 10 10 10-4.48 10-10S17.52 2 12 2zm-2 15l-5-5 1.41-1.41L10 14.17l7.59-7.59L19 8l-9 9z"/></svg>
<span style="left:1005.40px;top:926.90px;font-size:18.4px;line-height:22px;color:#202124;-webkit-text-stroke:0.36px #202124;transform:scaleX(1.0671);">A conversion action has been created, but the tag is not yet</span>
<span style="left:1005.40px;top:952.00px;font-size:18.4px;line-height:22px;color:#202124;-webkit-text-stroke:0.36px #202124;transform:scaleX(1.1318);">verified for:</span>
<span style="left:1116.17px;top:952.00px;font-size:18.4px;line-height:22px;color:#2a5fd1;-webkit-text-stroke:0.36px #2a5fd1;transform:scaleX(1.0312);">Request Demo_Google Ads</span>
<div style="left:1117.2px;top:973.2px;width:235px;height:0px;border-top:1.3px dashed #b9bcc2;"></div>
<div style="left:982px;top:955.5px;width:1.2px;height:36px;background:#dadce0;"></div>
<div style="left:971.3px;top:997.4px;width:25.4px;height:25.4px;background:#3871e0;border-radius:50%;"></div>
<span style="left:979.60px;top:1000.60px;font-size:16px;line-height:19px;color:#fff;-webkit-text-stroke:0.45px #fff;">2</span>
<span style="left:1007.50px;top:998.10px;font-size:18.4px;line-height:22px;color:#202124;-webkit-text-stroke:0.36px #202124;transform:scaleX(1.0794);">Add the tracking code to your website</span>
<span style="left:1003.30px;top:1034.70px;font-size:17.5px;line-height:21px;color:#3c4043;transform:scaleX(1.0550);">To complete setup, you&#x27;ll need to add the tracking code to your</span>
</div></body></html>
